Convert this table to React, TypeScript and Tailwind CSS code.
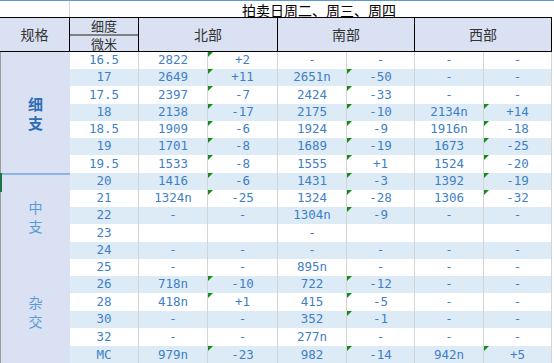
type Pair = [string, string, boolean];
type Row = { k: string; n: Pair; s: Pair; w: Pair };

const rows: Row[] = [
  { k: "16.5", n: ["2822", "+2", true], s: ["-", "-", false], w: ["-", "-", false] },
  { k: "17", n: ["2649", "+11", true], s: ["2651n", "-50", true], w: ["-", "-", false] },
  { k: "17.5", n: ["2397", "-7", true], s: ["2424", "-33", true], w: ["-", "-", false] },
  { k: "18", n: ["2138", "-17", true], s: ["2175", "-10", true], w: ["2134n", "+14", true] },
  { k: "18.5", n: ["1909", "-6", true], s: ["1924", "-9", true], w: ["1916n", "-18", true] },
  { k: "19", n: ["1701", "-8", true], s: ["1689", "-19", true], w: ["1673", "-25", true] },
  { k: "19.5", n: ["1533", "-8", true], s: ["1555", "+1", true], w: ["1524", "-20", true] },
  { k: "20", n: ["1416", "-6", true], s: ["1431", "-3", true], w: ["1392", "-19", true] },
  { k: "21", n: ["1324n", "-25", true], s: ["1324", "-28", true], w: ["1306", "-32", true] },
  { k: "22", n: ["-", "-", false], s: ["1304n", "-9", true], w: ["-", "-", false] },
  { k: "23", n: ["", "", false], s: ["-", "", false], w: ["", "", false] },
  { k: "24", n: ["-", "-", false], s: ["-", "-", false], w: ["-", "-", false] },
  { k: "25", n: ["-", "-", false], s: ["895n", "-", false], w: ["-", "-", false] },
  { k: "26", n: ["718n", "-10", true], s: ["722", "-12", true], w: ["-", "-", false] },
  { k: "28", n: ["418n", "+1", true], s: ["415", "-5", true], w: ["-", "-", false] },
  { k: "30", n: ["-", "-", false], s: ["352", "-1", true], w: ["-", "-", false] },
  { k: "32", n: ["-", "-", false], s: ["277n", "-", false], w: ["-", "-", false] },
  { k: "MC", n: ["979n", "-23", true], s: ["982", "-14", true], w: ["942n", "+5", true] },
];

const cjk = "font-['Noto_Sans_CJK_SC',sans-serif]";

function Cell({ v, band, last, tri }: { v: string; band: boolean; last: boolean; tri?: boolean }) {
  return (
    <div
      className={`relative flex items-center justify-center border-r border-[#d4d4d4] text-[12.5px] text-[#3f7fc6] font-['DejaVu_Sans_Mono',monospace] ${
        band ? "bg-[#ddebf7]" : "bg-white"
      } ${last ? "border-b border-b-[#5b9bd5]" : ""}`}
    >
      {tri && (
        <span className="absolute left-0 top-0 h-0 w-0 border-t-[5px] border-r-[5px] border-t-[#178a17] border-r-transparent" />
      )}
      {v}
    </div>
  );
}

function Group({ text, span, strong, sep }: { text: string[]; span: string; strong?: boolean; sep?: boolean }) {
  return (
    <div
      className={`relative ${span} col-start-1 flex flex-col items-center justify-center border-l border-[#9e9e9e] bg-[#d9e1f2] leading-[19px] ${cjk} ${
        strong ? "text-[15px] font-bold text-[#2f6db5]" : "text-[14px] text-[#5b9bd5]"
      } ${sep ? "border-t-2 border-t-[#8eb4e3]" : ""}`}
    >
      {sep && <span className="absolute -left-px -top-0.5 h-[19px] w-[2px] bg-[#217346]" />}
      {text.map((t) => (
        <span key={t}>{t}</span>
      ))}
    </div>
  );
}

export default function App() {
  return (
    <div className="w-[554px] h-[363px] bg-white border-t border-[#5b9bd5] overflow-hidden">
      <div className="grid w-[552px] grid-cols-[70px_69px_69px_70px_69px_68px_69px_68px] grid-rows-[16px_35px_17px_17px_18px_17px_17px_17px_18px_17px_17px_17px_18px_17px_17px_17px_18px_17px_18px]">
        {/* title row */}
        <div className="border-r border-[#d4d4d4] bg-white" />
        <div className={`col-span-7 flex items-center justify-center pl-4 pt-0.5 text-[14px] text-black ${cjk}`}>
          拍卖日周二、周三、周四
        </div>

        {/* header row */}
        <div className={`flex items-center justify-center border-y border-r border-black bg-[#d9e1f2] text-[14px] text-[#333] ${cjk}`}>
          规格
        </div>
        <div className={`flex flex-col border-y border-r border-black bg-[#d9e1f2] text-[13px] leading-none text-[#333] ${cjk}`}>
          <div className="flex flex-1 items-center justify-center border-b-2 border-[#808080]">细度</div>
          <div className="flex flex-1 items-center justify-center">微米</div>
        </div>
        <div className={`col-span-2 flex items-center justify-center border-y border-r border-black bg-[#d9e1f2] text-[14px] text-[#333] ${cjk}`}>
          北部
        </div>
        <div className={`col-span-2 flex items-center justify-center border-y border-r border-black bg-[#d9e1f2] text-[14px] text-[#333] ${cjk}`}>
          南部
        </div>
        <div className={`col-span-2 flex items-center justify-center border-y border-r border-black bg-[#d9e1f2] text-[14px] text-[#333] ${cjk}`}>
          西部
        </div>

        {/* spec groups */}
        <Group text={["细", "支"]} span="row-start-3 row-span-7" strong />
        <Group text={["中", "支"]} span="row-start-10 row-span-5" sep />
        <Group text={["杂", "交"]} span="row-start-15 row-span-6" />

        {rows.map((r, i) => {
          const band = i % 2 === 1;
          const last = i === rows.length - 1;
          return [
            <div
              key={r.k}
              className={`col-start-2 flex items-center justify-center border-r border-[#d4d4d4] text-[12.5px] text-[#3f7fc6] font-['DejaVu_Sans_Mono',monospace] ${
                band ? "bg-[#ddebf7]" : "bg-white"
              } ${last ? "border-b border-b-[#5b9bd5]" : ""}`}
            >
              {r.k}
            </div>,
            <Cell key={r.k + "np"} v={r.n[0]} band={band} last={last} />,
            <Cell key={r.k + "nc"} v={r.n[1]} band={band} last={last} tri={r.n[2]} />,
            <Cell key={r.k + "sp"} v={r.s[0]} band={band} last={last} />,
            <Cell key={r.k + "sc"} v={r.s[1]} band={band} last={last} tri={r.s[2]} />,
            <Cell key={r.k + "wp"} v={r.w[0]} band={band} last={last} />,
            <Cell key={r.k + "wc"} v={r.w[1]} band={band} last={last} tri={r.w[2]} />,
          ];
        })}
      </div>
    </div>
  );
}
